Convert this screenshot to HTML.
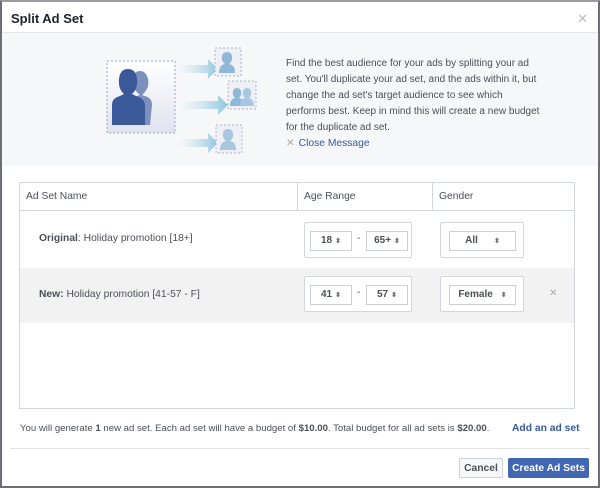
<!DOCTYPE html>
<html><head><style>
*{box-sizing:border-box;margin:0;padding:0}
body{width:600px;height:488px;font-family:"Liberation Sans",Arial,sans-serif;font-size:10.5px;color:#4b4f56;background:#fff;position:relative;overflow:hidden}
.frame{position:absolute;left:0;top:0;width:600px;height:488px;border:2px solid #6b6e72;border-top-color:#9a9c9f}
.hdr{position:absolute;left:2px;top:2px;right:2px;height:31px;background:#fff;border-bottom:1px solid #e5e5e5}
.hdr b{position:absolute;left:9px;top:9px;font-size:13px;color:#1d2129}
.hdr .x{position:absolute;right:10px;top:9px;color:#bbb;font-size:13px}
.info{position:absolute;left:2px;top:33px;right:2px;height:133px;background:#f6f7f9}
.info p{position:absolute;left:284px;top:23px;line-height:16px;font-size:10px;color:#4b4f56;white-space:nowrap}
.cm{position:absolute;left:284px;top:104px;font-size:10.3px;color:#365899}
.cm span{color:#aaa;margin-right:4px}
.tbl{position:absolute;left:19px;top:182px;width:556px;height:227px;border:1px solid #d3d6db;background:#fff}
.th{height:28px;border-bottom:1px solid #d3d6db;position:relative;font-size:10.3px;color:#4b4f56}
.th div{position:absolute;top:0;height:27px;line-height:27px;padding-left:6px}
.row{position:absolute;left:0;width:554px;font-size:10.3px}
.box{position:absolute;border:1px solid #d3d6db;border-radius:2px;background:#fff}
.sel{position:absolute;border:1px solid #ccd0d5;background:#fff;height:20px;line-height:18px;text-align:center;font-weight:bold;color:#4b4f56;font-size:10px}
.sel i{font-style:normal;font-size:7px;color:#777;margin-left:3px}
.foot{position:absolute;left:20px;top:423px;font-size:9.6px;color:#4b4f56;white-space:nowrap}
.add{position:absolute;left:512px;top:423px;font-weight:bold;color:#365899;font-size:10.3px}
.div{position:absolute;left:10px;right:10px;top:448px;border-top:1px solid #e5e5e5}
.btn{position:absolute;top:458px;height:20px;display:flex;align-items:center;justify-content:center;font-weight:bold;font-size:10.3px;border-radius:2px;white-space:nowrap}
</style></head><body>
<div class="frame"></div>
<div class="hdr"><b>Split Ad Set</b><span class="x">✕</span></div>
<div class="info">
<svg style="position:absolute;left:98px;top:10px" width="160" height="120" viewBox="0 0 160 120">
<defs><linearGradient id="ar" x1="0" x2="1"><stop offset="0" stop-color="#c7e2ee" stop-opacity="0"/><stop offset="1" stop-color="#8fc6de"/></linearGradient>
<linearGradient id="bg" x1="0" y1="0" x2="0" y2="1"><stop offset="0" stop-color="#fff"/><stop offset="1" stop-color="#dfe3ee"/></linearGradient></defs>
<rect x="7" y="18" width="68" height="72" fill="url(#bg)" stroke="#9aa6c8" stroke-dasharray="2,2"/>
<path d="M50 82 L52 62 Q52 55 45 53 L42 52 Q50 45 48 36 Q46 28 40 28 Q34 28 33 36 Q32 46 40 52 L37 53 Q30 55 30 62 L30 82Z" fill="#7d8fbc"/>
<path d="M45 82 L45 62 Q44 55 36 53 L32 51 Q38 46 37 36 Q36 26 28 26 Q20 26 19 36 Q18 46 24 51 L20 53 Q12 55 12 62 L12 82Z" fill="#3b5998"/>
<path d="M78 22 h30 v-6 l10 10 -10 10 v-6 h-30z" fill="url(#ar)"/>
<path d="M78 58 h40 v-6 l10 10 -10 10 v-6 h-40z" fill="url(#ar)"/>
<path d="M78 96 h30 v-6 l10 10 -10 10 v-6 h-30z" fill="url(#ar)"/>
<rect x="115" y="5" width="26" height="28" fill="#eef0f5" stroke="#aab4d0" stroke-dasharray="2,2"/>
<path d="M119 30 q0-8 6-9 q-4-3-3-8 q1-4 5-4 q4 0 5 4 q1 5-3 8 q6 1 6 9z" fill="#8fb8d6"/>
<rect x="128" y="38" width="28" height="28" fill="#eef0f5" stroke="#aab4d0" stroke-dasharray="2,2"/>
<path d="M130 63 q0-7 5-8 q-3-3-2-7 q1-3 4-3 q3 0 4 3 q1 4-2 7 q5 1 5 8z" fill="#8fb8d6"/>
<path d="M140 63 q0-7 5-8 q-3-3-2-7 q1-3 4-3 q3 0 4 3 q1 4-2 7 q5 1 5 8z" fill="#a9c8df"/>
<rect x="116" y="82" width="26" height="28" fill="#eef0f5" stroke="#aab4d0" stroke-dasharray="2,2"/>
<path d="M120 107 q0-8 6-9 q-4-3-3-8 q1-4 5-4 q4 0 5 4 q1 5-3 8 q6 1 6 9z" fill="#a9c8df"/>
</svg>
<p>Find the best audience for your ads by splitting your ad<br>set. You'll duplicate your ad set, and the ads within it, but<br>change the ad set's target audience to see which<br>performs best. Keep in mind this will create a new budget<br>for the duplicate ad set.</p>
<div class="cm"><span>✕</span>Close Message</div>
</div>
<div class="tbl">
<div class="th"><div style="left:0;width:278px;border-right:1px solid #d3d6db">Ad Set Name</div><div style="left:278px;width:135px;border-right:1px solid #d3d6db">Age Range</div><div style="left:413px">Gender</div></div>
<div class="row" style="top:28px;height:57px;background:#fff">
<div style="position:absolute;left:19px;top:22px"><b>Original</b>: Holiday promotion [18+]</div>
<div class="box" style="left:284px;top:11px;width:108px;height:36px"></div>
<div class="sel" style="left:290px;top:20px;width:42px">18<i>⬍</i></div>
<div style="position:absolute;left:337px;top:22px">-</div>
<div class="sel" style="left:346px;top:20px;width:42px">65+<i>⬍</i></div>
<div class="box" style="left:420px;top:11px;width:84px;height:36px"></div>
<div class="sel" style="left:429px;top:20px;width:67px">All<i style="margin-left:16px">⬍</i></div>
</div>
<div class="row" style="top:85px;height:55px;background:#f2f2f2">
<div style="position:absolute;left:19px;top:21px"><b>New:</b> Holiday promotion [41-57 - F]</div>
<div class="box" style="left:284px;top:8px;width:108px;height:36px"></div>
<div class="sel" style="left:290px;top:17px;width:42px">41<i>⬍</i></div>
<div style="position:absolute;left:337px;top:19px">-</div>
<div class="sel" style="left:346px;top:17px;width:42px">57<i>⬍</i></div>
<div class="box" style="left:420px;top:8px;width:84px;height:36px"></div>
<div class="sel" style="left:429px;top:17px;width:67px">Female<i style="margin-left:8px">⬍</i></div>
<div style="position:absolute;left:529px;top:20px;color:#aaa;font-size:10px">✕</div>
</div>
</div>
<div class="foot">You will generate <b>1</b> new ad set. Each ad set will have a budget of <b>$10.00</b>. Total budget for all ad sets is <b>$20.00</b>.</div>
<div class="add">Add an ad set</div>
<div class="div"></div>
<div class="btn" style="left:459px;width:44px;border:1px solid #ced0d4;background:#f6f7f9;color:#4b4f56">Cancel</div>
<div class="btn" style="left:508px;width:81px;border:1px solid #4267b2;background:#4267b2;color:#fff">Create Ad Sets</div>
</body></html>
